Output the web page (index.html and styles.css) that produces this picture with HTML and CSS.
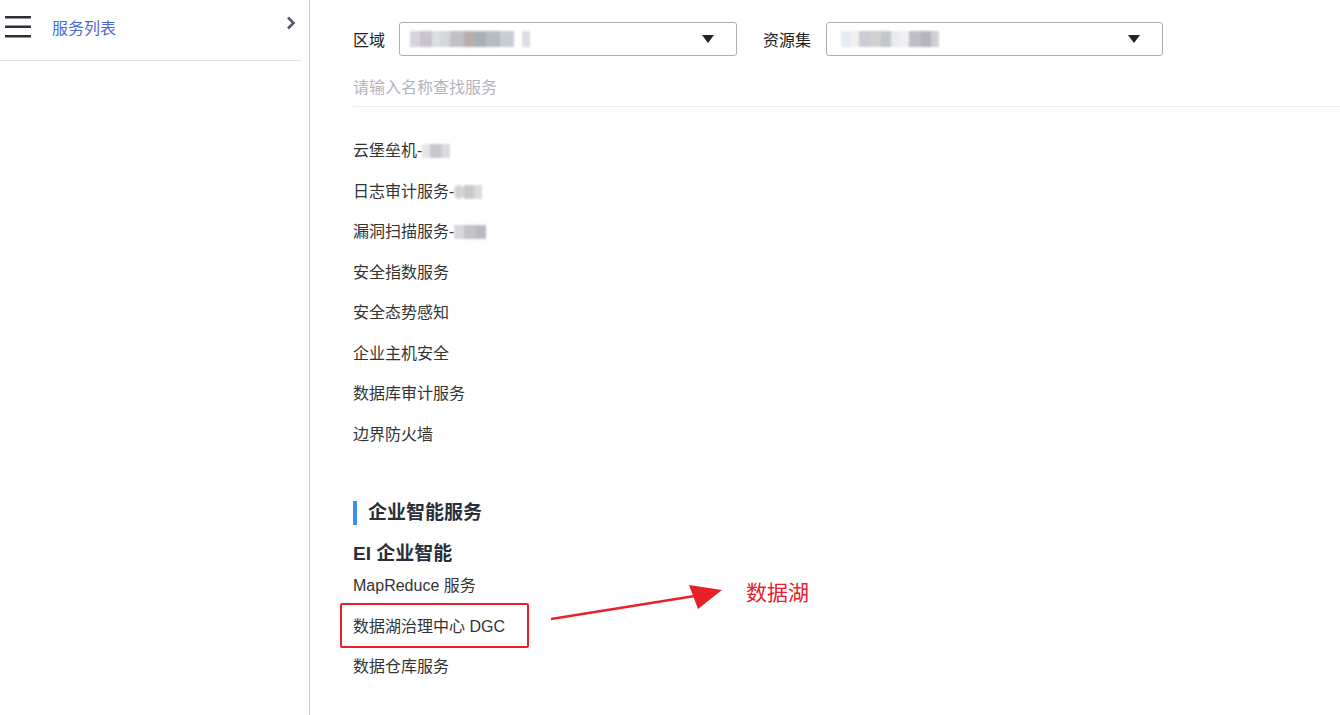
FILE: index.html
```html
<!DOCTYPE html>
<html lang="zh">
<head>
<meta charset="utf-8">
<link rel="stylesheet" href="styles.css">
</head>
<body>
<div class="page">
  <aside class="sidebar">
    <div class="side-head">
      <svg class="burger" width="26" height="22" viewBox="0 0 26 22"><rect x="0" y="0" width="26" height="2.5" fill="#2a2f3a"/><rect x="0" y="9.5" width="26" height="2.5" fill="#2a2f3a"/><rect x="0" y="19" width="26" height="2.5" fill="#2a2f3a"/></svg>
      <span class="side-title">服务列表</span>
      <svg class="chev" width="10" height="14" viewBox="0 0 10 14"><path d="M2 1.5 L7.5 7 L2 12.5" fill="none" stroke="#555a66" stroke-width="2.6"/></svg>
    </div>
  </aside>
  <main class="content">
    <div class="filters">
      <label class="flabel">区域</label>
      <div class="select s1">
        <span class="blur">
          <i style="width:10px;background:#d8d2dc"></i><i style="width:12px;background:#c8c4d0"></i><i style="width:8px;background:#dcdfe2"></i><i style="width:10px;background:#d4d8dc"></i><i style="width:14px;background:#c2c0c6"></i><i style="width:10px;background:#b8aeac"></i><i style="width:12px;background:#a8b0b6"></i><i style="width:14px;background:#b6bcc2"></i><i style="width:14px;background:#c8ccd4"></i><i style="width:8px;background:#fff"></i><i style="width:8px;background:#dcdce2"></i>
        </span>
        <span class="caret"></span>
      </div>
      <label class="flabel">资源集</label>
      <div class="select s2">
        <span class="blur">
          <i style="width:10px;background:#e4ecf2"></i><i style="width:8px;background:#f2f0f0"></i><i style="width:12px;background:#ccccd4"></i><i style="width:10px;background:#d2d2d2"></i><i style="width:10px;background:#c4c6c8"></i><i style="width:10px;background:#e8ecf0"></i><i style="width:8px;background:#f0f0f4"></i><i style="width:12px;background:#bebec6"></i><i style="width:10px;background:#b4b4bc"></i><i style="width:8px;background:#cfd0d6"></i>
        </span>
        <span class="caret"></span>
      </div>
    </div>
    <div class="search">请输入名称查找服务</div>
    <ul class="svc-list">
      <li>云堡垒机-<span class="mask"><i style="width:8px;background:#e6e6ea"></i><i style="width:12px;background:#c8c8cc"></i><i style="width:8px;background:#dcdce0"></i></span></li>
      <li>日志审计服务-<span class="mask"><i style="width:10px;background:#d4d4d8;border-radius:5px"></i><i style="width:10px;background:#c8c8cc"></i><i style="width:8px;background:#dcdce0"></i></span></li>
      <li>漏洞扫描服务-<span class="mask"><i style="width:10px;background:#d8d8dc"></i><i style="width:12px;background:#c4c4c8"></i><i style="width:10px;background:#b8b8be"></i></span></li>
      <li>安全指数服务</li>
      <li>安全态势感知</li>
      <li>企业主机安全</li>
      <li>数据库审计服务</li>
      <li>边界防火墙</li>
    </ul>
    <h2 class="section">企业智能服务</h2>
    <h3 class="group">EI 企业智能</h3>
    <ul class="svc-list tight">
      <li>MapReduce 服务</li>
      <li class="hl">数据湖治理中心 DGC</li>
      <li>数据仓库服务</li>
    </ul>
    <div class="annot">
      <svg class="arrow" width="180" height="40" viewBox="0 0 180 40"><path d="M0 36 L150 12" stroke="#e8202a" stroke-width="2.4" fill="none"/><polygon points="171,7 138,2 147,26" fill="#e8202a"/></svg>
      <span class="annot-text">数据湖</span>
    </div>
  </main>
</div>
</body>
</html>
```
FILE: styles.css
```css
* { box-sizing: border-box; }
html, body { margin: 0; padding: 0; background: #fff; }
body { font-family: "Liberation Sans", "Noto Sans CJK SC", sans-serif; color: #333; width: 1340px; height: 715px; overflow: hidden; }
.page { display: flex; height: 715px; }
.sidebar { width: 310px; flex: none; border-right: 1px solid #c8c8c8; height: 100%; }
.side-head { display: flex; align-items: center; height: 61px; margin-right: 8px; border-bottom: 1px solid #e2e2e2; padding-left: 5px; padding-bottom: 6px; }
.burger { flex: none; }
.side-title { margin-left: 21px; font-size: 16px; color: #4a6ad2; }
.chev { margin-left: auto; margin-right: 5px; margin-top: -8px; }
.content { flex: 1; position: relative; padding-left: 43px; }
.filters { display: flex; align-items: center; height: 34px; margin-top: 22px; }
.flabel { font-size: 16px; color: #222; }
.select { position: relative; height: 34px; border: 1px solid #aeaeb6; border-radius: 3px; display: flex; align-items: center; }
.s1 { width: 338px; margin-left: 14px; margin-right: 26px; }
.s2 { width: 337px; margin-left: 15px; }
.blur { display: flex; height: 16px; margin-left: 10px; filter: blur(1px); }
.blur i { display: block; height: 100%; }
.s2 .blur { margin-left: 14px; }
.caret { margin-left: auto; margin-right: 22px; width: 0; height: 0; border-left: 6px solid transparent; border-right: 6px solid transparent; border-top: 8px solid #222; }
.search { margin-top: 20px; height: 31px; border-bottom: 1px solid #ececec; font-size: 16px; color: #b4b4bc; line-height: 24px; }
.svc-list { list-style: none; margin: 24px 0 0; padding: 0; }
.svc-list li { font-size: 16px; height: 40.5px; line-height: 40.5px; color: #333; display: flex; align-items: center; }
.mask { display: inline-flex; height: 14px; filter: blur(0.8px); }
.mask i { display: block; height: 100%; }
.section { margin: 46px 0 0; font-size: 19px; font-weight: bold; color: #2a2f3a; border-left: 4px solid #3d8ef0; padding-left: 11px; line-height: 24px; height: 24px; }
.group { margin: 16px 0 0; font-size: 19px; font-weight: bold; color: #2a2f3a; line-height: 26px; }
.svc-list.tight { margin-top: -1px; }
.hl { position: relative; }
.hl::before { content: ""; position: absolute; left: -13px; top: -4px; width: 185px; height: 41px; border: 2px solid #e8202a; border-radius: 2px; }
.annot { position: absolute; left: 241px; top: 573px; display: flex; align-items: flex-start; }
.arrow { display: block; margin-top: 10px; }
.annot-text { margin-left: 15px; font-size: 21px; color: #e8202a; line-height: 40px; }
```
